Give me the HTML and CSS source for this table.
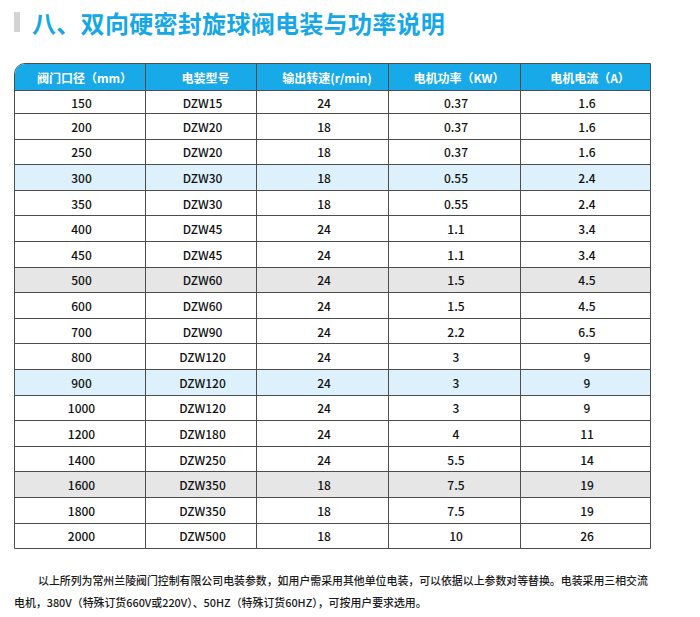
FILE: index.html
```html
<!DOCTYPE html>
<html lang="zh-CN">
<head>
<meta charset="utf-8">
<title>双向硬密封旋球阀电装与功率说明</title>
<link rel="stylesheet" href="styles.css">
</head>
<body>
<div class="page">
  <h1 class="title"><span class="title-bar"></span><span class="title-text">八、双向硬密封旋球阀电装与功率说明</span></h1>
  <div class="table-wrap">
    <table class="spec">
      <colgroup>
        <col class="c1"><col class="c2"><col class="c3"><col class="c4"><col class="c5">
      </colgroup>
      <thead>
        <tr><th>阀门口径（mm）</th><th>电装型号</th><th>输出转速(r/min)</th><th>电机功率（KW）</th><th>电机电流（A）</th></tr>
      </thead>
      <tbody>
        <tr class="first"><td>150</td><td>DZW15</td><td>24</td><td>0.37</td><td>1.6</td></tr>
        <tr><td>200</td><td>DZW20</td><td>18</td><td>0.37</td><td>1.6</td></tr>
        <tr><td>250</td><td>DZW20</td><td>18</td><td>0.37</td><td>1.6</td></tr>
        <tr class="blue"><td>300</td><td>DZW30</td><td>18</td><td>0.55</td><td>2.4</td></tr>
        <tr><td>350</td><td>DZW30</td><td>18</td><td>0.55</td><td>2.4</td></tr>
        <tr><td>400</td><td>DZW45</td><td>24</td><td>1.1</td><td>3.4</td></tr>
        <tr><td>450</td><td>DZW45</td><td>24</td><td>1.1</td><td>3.4</td></tr>
        <tr class="gray"><td>500</td><td>DZW60</td><td>24</td><td>1.5</td><td>4.5</td></tr>
        <tr><td>600</td><td>DZW60</td><td>24</td><td>1.5</td><td>4.5</td></tr>
        <tr><td>700</td><td>DZW90</td><td>24</td><td>2.2</td><td>6.5</td></tr>
        <tr><td>800</td><td>DZW120</td><td>24</td><td>3</td><td>9</td></tr>
        <tr class="blue"><td>900</td><td>DZW120</td><td>24</td><td>3</td><td>9</td></tr>
        <tr><td>1000</td><td>DZW120</td><td>24</td><td>3</td><td>9</td></tr>
        <tr><td>1200</td><td>DZW180</td><td>24</td><td>4</td><td>11</td></tr>
        <tr><td>1400</td><td>DZW250</td><td>24</td><td>5.5</td><td>14</td></tr>
        <tr class="gray"><td>1600</td><td>DZW350</td><td>18</td><td>7.5</td><td>19</td></tr>
        <tr><td>1800</td><td>DZW350</td><td>18</td><td>7.5</td><td>19</td></tr>
        <tr class="last"><td>2000</td><td>DZW500</td><td>18</td><td>10</td><td>26</td></tr>
      </tbody>
    </table>
  </div>
  <p class="note">以上所列为常州兰陵阀门控制有限公司电装参数，如用户需采用其他单位电装，可以依据以上参数对等替换。电装采用三相交流<br>电机，380V（特殊订货660V或220V）、50HZ（特殊订货60HZ），可按用户要求选用。</p>
</div>
</body>
</html>
```

FILE: styles.css
```css
html, body {
  margin: 0;
  padding: 0;
  background: #ffffff;
}

body {
  font-family: "Noto Sans CJK SC", "Noto Sans", sans-serif;
  color: #222222;
}

.page {
  width: 700px;
  height: 617px;
  overflow: hidden;
}

.title {
  margin: 0;
  padding: 8px 0 0 14px;
  height: 55px;
  box-sizing: border-box;
  display: flex;
  align-items: flex-start;
  gap: 12px;
  font-size: 24px;
  line-height: 30px;
  font-weight: bold;
  color: #16a7e7;
}

.title-bar {
  width: 6px;
  height: 20px;
  margin-top: 4px;
  background: #d3d3d3;
}

.title-text {
  letter-spacing: 0.3px;
}

.table-wrap {
  margin: 8px 0 0 14px;
  width: 637px;
  border: 1px solid #4d4d4d;
  border-top-left-radius: 11px;
  overflow: hidden;
  box-sizing: border-box;
}

.spec {
  width: 100%;
  border-collapse: separate;
  border-spacing: 0;
  table-layout: fixed;
  font-size: 12px;
}

.c1 { width: 131px; }
.c2 { width: 111px; }
.c3 { width: 132px; }
.c4 { width: 132px; }
.c5 { width: auto; }

.spec th,
.spec td {
  padding: 0;
  text-align: center;
  border-right: 1px solid #4d4d4d;
  border-bottom: 1px solid #4d4d4d;
  box-sizing: border-box;
}

.spec th:last-child,
.spec td:last-child {
  border-right: none;
}

.spec th {
  height: 27px;
  padding-left: 9px;
  background: #17a9e8;
  color: #ffffff;
  font-weight: bold;
  font-size: 12px;
}

.spec td {
  height: 25.6px;
  padding-left: 3px;
  color: #111111;
  font-weight: 500;
}

.spec tr.first td {
  height: 23px;
}

.spec tr.last td {
  border-bottom: none;
  height: 24.6px;
}

.spec tr.blue td {
  background: #dcf1fb;
}

.spec tr.gray td {
  background: #e6e6e6;
}

.note {
  margin: 20px 0 0 0;
  padding: 0 0 0 14px;
  width: 690px;
  box-sizing: border-box;
  font-size: 10.9px;
  line-height: 22px;
  text-indent: 24px;
  color: #1a1a1a;
  font-weight: 500;
  white-space: nowrap;
}
```
